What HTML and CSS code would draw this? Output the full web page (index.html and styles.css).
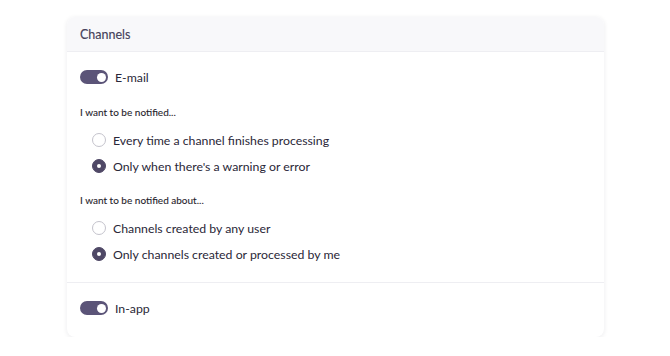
FILE: index.html
```html
<!DOCTYPE html>
<html lang="en">
<head>
    <meta charset="UTF-8">
    <meta name="viewport" content="width=device-width, initial-scale=1.0">
    <title>Notification settings</title>
    <link rel="stylesheet" href="styles.css">
</head>
<body>
    <div class="card">
        <div class="card-head">Channels</div>
        <div class="section">
            <label class="switch-row">
                <span class="switch on"><span class="knob"></span></span>
                <span>E-mail</span>
            </label>
            <p class="group-label">I want to be notified...</p>
            <div class="radio-list">
                <label class="radio-row"><span class="radio"></span>Every time a channel finishes processing</label>
                <label class="radio-row"><span class="radio checked"></span>Only when there's a warning or error</label>
            </div>
            <p class="group-label about">I want to be notified about...</p>
            <div class="radio-list">
                <label class="radio-row"><span class="radio"></span>Channels created by any user</label>
                <label class="radio-row"><span class="radio checked"></span>Only channels created or processed by me</label>
            </div>
        </div>
        <div class="section last">
            <label class="switch-row">
                <span class="switch on"><span class="knob"></span></span>
                <span>In-app</span>
            </label>
        </div>
    </div>
</body>
</html>
```

FILE: styles.css
```css
body { margin: 0; background: #fff; font-family: "Lato", sans-serif; color: #2a2738; }
.card { margin: 17px 0 0 67px; width: 537px; background: #fff; border-radius: 8px; box-shadow: 0 1px 5px rgba(30, 30, 50, 0.09); overflow: hidden; }
.card-head { height: 35px; padding: 1px 13px 0; display: flex; align-items: center; background: #f8f8fa; border-bottom: 1px solid #eeeef2; box-sizing: border-box; font-size: 12.5px; color: #45425a; -webkit-text-stroke: 0.15px #45425a; }
.section { padding: 15px 13px 15px; border-bottom: 1px solid #eeeef2; }
.section.last { border-bottom: none; padding: 15px 13px 19px; }
.switch-row { display: flex; align-items: center; gap: 7px; height: 20px; font-size: 12.3px; }
.switch { width: 28px; height: 14px; border-radius: 7px; background: #5b5478; display: flex; align-items: center; justify-content: flex-end; padding: 0 2px; box-sizing: border-box; }
.knob { width: 9px; height: 9px; border-radius: 50%; background: #fff; }
.group-label { margin: 18px 0 0; height: 14px; line-height: 14px; font-size: 10px; color: #1f1d2b; -webkit-text-stroke: 0.1px #1f1d2b; }
.group-label.about { margin-top: 14px; }
.radio-list { margin-top: 8px; padding-left: 12px; }
.radio-row { display: flex; align-items: center; gap: 7px; height: 26px; font-size: 12.3px; }
.radio { width: 14px; height: 14px; border-radius: 50%; border: 1px solid #c4c3cc; box-sizing: border-box; display: flex; align-items: center; justify-content: center; }
.radio.checked { background: #4f4866; border-color: #4f4866; }
.radio.checked::after { content: ""; width: 4px; height: 4px; border-radius: 50%; background: #fff; }
```
